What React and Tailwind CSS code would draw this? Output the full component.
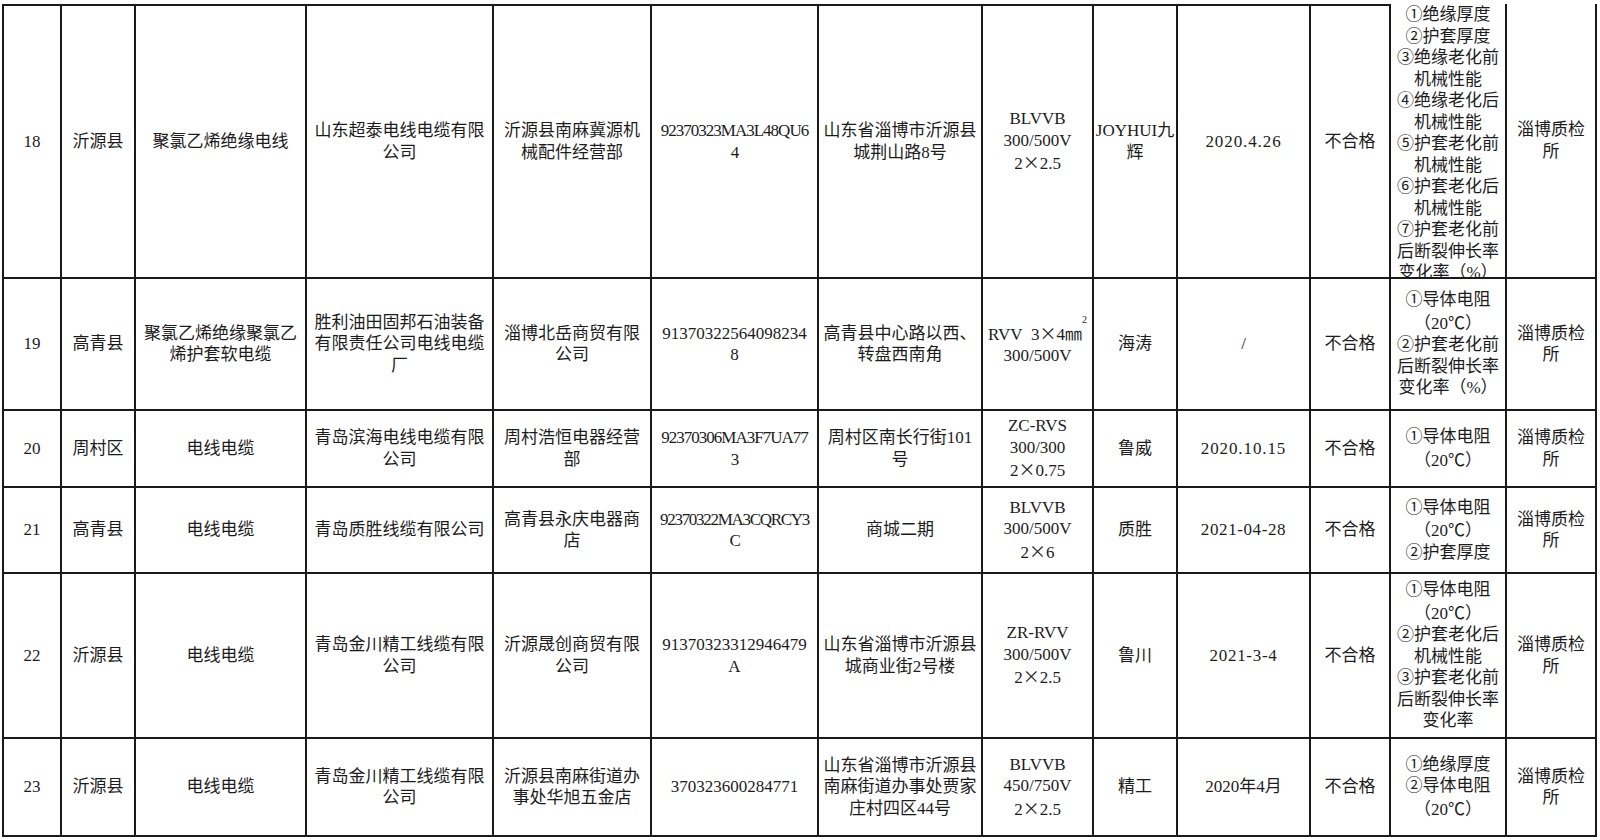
import React from 'react';

// inspection results table, rows 18-23
const rows = [
  {
    h: 'h-[275px]',
    first: true,
    cells: [
      ['18'],
      ['沂源县'],
      ['聚氯乙烯绝缘电线'],
      ['山东超泰电线电缆有限', '公司'],
      ['沂源县南麻冀源机', '械配件经营部'],
      { lines: ['92370323MA3L48QU6', '4'], cls: 'tracking-[-1px]' },
      ['山东省淄博市沂源县', '城荆山路8号'],
      ['BLVVB', '300/500V', '2×2.5'],
      ['JOYHUI九', '辉'],
      { lines: ['2020.4.26'], cls: 'tracking-[0.9px]' },
      ['不合格'],
      {
        lines: [
          '①绝缘厚度', '②护套厚度', '③绝缘老化前', '机械性能', '④绝缘老化后', '机械性能',
          '⑤护套老化前', '机械性能', '⑥护套老化后', '机械性能', '⑦护套老化前', '后断裂伸长率', '变化率（%）',
        ],
        top: true,
      },
      ['淄博质检', '所'],
    ],
  },
  {
    h: 'h-[132px]',
    cells: [
      ['19'],
      ['高青县'],
      ['聚氯乙烯绝缘聚氯乙', '烯护套软电缆'],
      ['胜利油田固邦石油装备', '有限责任公司电线电缆', '厂'],
      ['淄博北岳商贸有限', '公司'],
      ['91370322564098234', '8'],
      ['高青县中心路以西、', '转盘西南角'],
      ['MM', '300/500V'],
      ['海涛'],
      ['/'],
      ['不合格'],
      ['①导体电阻', '（20℃）', '②护套老化前', '后断裂伸长率', '变化率（%）'],
      ['淄博质检', '所'],
    ],
  },
  {
    h: 'h-[77px]',
    cells: [
      ['20'],
      ['周村区'],
      ['电线电缆'],
      ['青岛滨海电线电缆有限', '公司'],
      ['周村浩恒电器经营', '部'],
      { lines: ['92370306MA3F7UA77', '3'], cls: 'tracking-[-1px]' },
      ['周村区南长行街101', '号'],
      ['ZC-RVS', '300/300', '2×0.75'],
      ['鲁威'],
      { lines: ['2020.10.15'], cls: 'tracking-[0.9px]' },
      ['不合格'],
      ['①导体电阻', '（20℃）'],
      ['淄博质检', '所'],
    ],
  },
  {
    h: 'h-[86px]',
    cells: [
      ['21'],
      ['高青县'],
      ['电线电缆'],
      ['青岛质胜线缆有限公司'],
      ['高青县永庆电器商', '店'],
      { lines: ['92370322MA3CQRCY3', 'C'], cls: 'tracking-[-1.3px]' },
      ['商城二期'],
      ['BLVVB', '300/500V', '2×6'],
      ['质胜'],
      { lines: ['2021-04-28'], cls: 'tracking-[0.6px]' },
      ['不合格'],
      ['①导体电阻', '（20℃）', '②护套厚度'],
      ['淄博质检', '所'],
    ],
  },
  {
    h: 'h-[165px]',
    cells: [
      ['22'],
      ['沂源县'],
      ['电线电缆'],
      ['青岛金川精工线缆有限', '公司'],
      ['沂源晟创商贸有限', '公司'],
      ['91370323312946479', 'A'],
      ['山东省淄博市沂源县', '城商业街2号楼'],
      ['ZR-RVV', '300/500V', '2×2.5'],
      ['鲁川'],
      { lines: ['2021-3-4'], cls: 'tracking-[0.7px]' },
      ['不合格'],
      ['①导体电阻', '（20℃）', '②护套老化后', '机械性能', '③护套老化前', '后断裂伸长率', '变化率'],
      ['淄博质检', '所'],
    ],
  },
  {
    h: 'h-[98px]',
    cells: [
      ['23'],
      ['沂源县'],
      ['电线电缆'],
      ['青岛金川精工线缆有限', '公司'],
      ['沂源县南麻街道办', '事处华旭五金店'],
      ['370323600284771'],
      ['山东省淄博市沂源县', '南麻街道办事处贾家', '庄村四区44号'],
      ['BLVVB', '450/750V', '2×2.5'],
      ['精工'],
      ['2020年4月'],
      ['不合格'],
      ['①绝缘厚度', '②导体电阻', '（20℃）'],
      ['淄博质检', '所'],
    ],
  },
];

// × and ℃ come out full width in the CJK face, as in the sheet
function Wide({ text }) {
  const parts = text.split(/([×℃])/);
  return parts.map((p, i) =>
    p === '×' || p === '℃' ? (
      <span key={i} className="font-['Noto_Sans_CJK_SC',sans-serif]">{p}</span>
    ) : (
      p
    )
  );
}

function Line({ text }) {
  if (text === 'MM') {
    // RVV 3×4mm² with a raised 2
    return (
      <div className="whitespace-nowrap">
        RVV&nbsp;&nbsp;3<Wide text="×" />4㎜<sup className="relative top-[-2px] text-[10px] align-top">2</sup>
      </div>
    );
  }
  return (
    <div className="whitespace-nowrap">
      <Wide text={text} />
    </div>
  );
}

function Cell({ cell, top }) {
  const lines = Array.isArray(cell) ? cell : cell.lines;
  const extra = Array.isArray(cell) ? '' : cell.cls || '';
  const anchorTop = !Array.isArray(cell) && cell.top;
  return (
    <div
      className={`flex justify-center overflow-hidden text-center border-r-2 border-b-2 border-[#1a1a1a] ${anchorTop ? 'items-start' : 'items-center'} ${top ? 'border-t-2' : ''}`}
    >
      <div className={`leading-[21.5px] ${extra}`}>
        {lines.map((t, i) => (
          <Line key={i} text={t} />
        ))}
      </div>
    </div>
  );
}

export default function App() {
  return (
    <div className="w-[1600px] h-[840px] bg-white overflow-hidden pt-[4px] pl-[2px] text-[17px] text-[#1c1c1c] font-['Liberation_Serif','Noto_Sans_CJK_SC',serif]">
      <div className="w-[1595px] border-l-2 border-[#1a1a1a]">
        {rows.map((row, ri) => (
          <div
            key={ri}
            className={`grid grid-cols-[58px_74px_171px_187px_158px_167px_164px_111px_84px_133px_80px_116px_90px] ${row.h}`}
          >
            {row.cells.map((c, ci) => (
              <Cell key={ci} cell={c} top={row.first && ci < 11} />
            ))}
          </div>
        ))}
      </div>
    </div>
  );
}
